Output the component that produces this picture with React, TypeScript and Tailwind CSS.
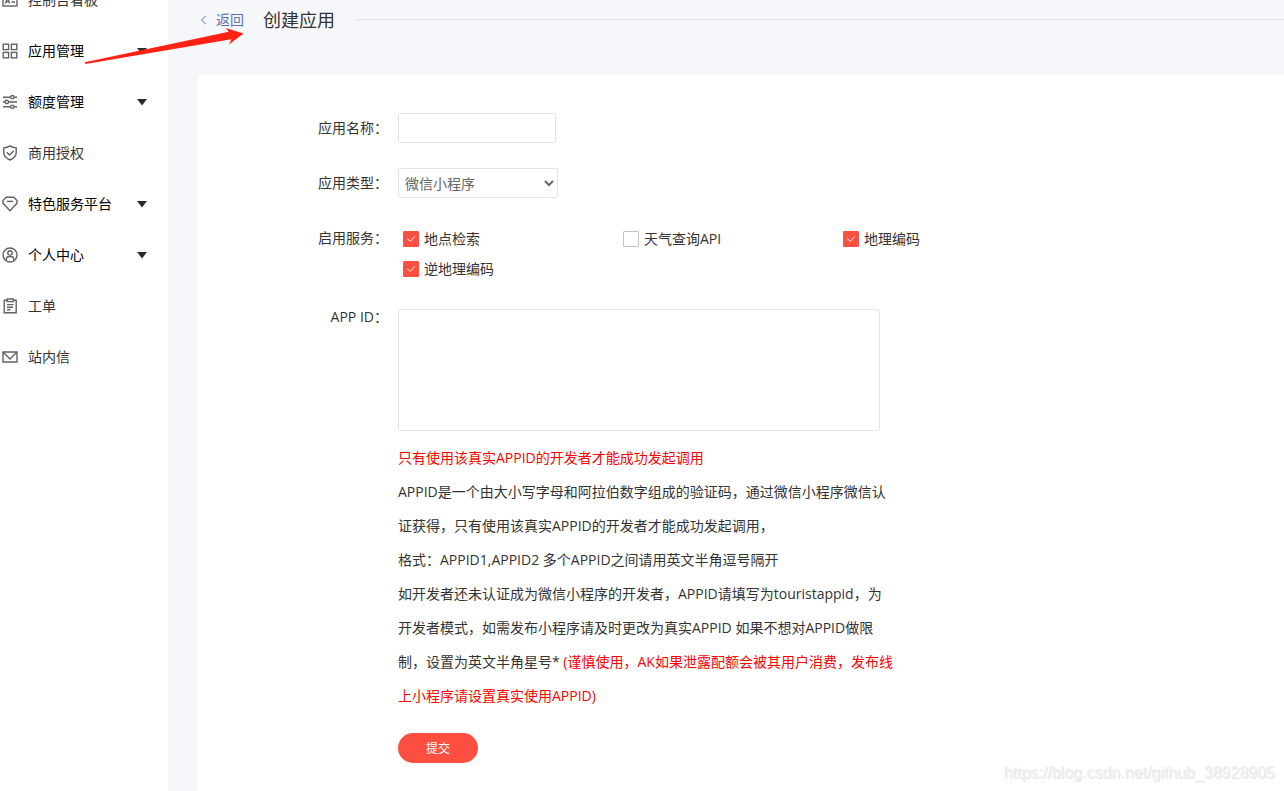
import type { ReactNode } from "react";

type NavItem = { label: string; icon: ReactNode; expandable?: boolean };

function Icon({ children }: { children: ReactNode }) {
  return (
    <svg
      viewBox="0 0 16 16"
      className="size-4 shrink-0"
      fill="none"
      stroke="#606266"
      strokeWidth="1.4"
      aria-hidden="true"
    >
      {children}
    </svg>
  );
}

const navItems: NavItem[] = [
  {
    label: "控制台看板",
    icon: (
      <Icon>
        <rect x="1" y="2" width="14" height="12" />
        <path d="M3.5 11.5 5.5 5l2 6.5M4 9.5h3M9.5 7H13M9.5 10H13" />
      </Icon>
    ),
  },
  {
    label: "应用管理",
    icon: (
      <Icon>
        <rect x="1.2" y="1.2" width="5.4" height="5.4" />
        <rect x="9.4" y="1.2" width="5.4" height="5.4" />
        <rect x="1.2" y="9.4" width="5.4" height="5.4" />
        <rect x="9.4" y="9.4" width="5.4" height="5.4" />
      </Icon>
    ),
    expandable: true,
  },
  {
    label: "额度管理",
    icon: (
      <Icon>
        <path d="M1 3.2h7.6M12.2 3.2H15M1 8h2M6.6 8H15M1 12.8h7.6M12.2 12.8H15" />
        <circle cx="10.4" cy="3.2" r="1.7" />
        <circle cx="4.8" cy="8" r="1.7" />
        <circle cx="10.4" cy="12.8" r="1.7" />
      </Icon>
    ),
    expandable: true,
  },
  {
    label: "商用授权",
    icon: (
      <Icon>
        <path d="M8 .9c1.800 1.300 3.700 1.900 6.200 2v5.200c0 3-2.500 5.200-6.200 6.900-3.700-1.700-6.200-3.900-6.200-6.900V2.900C4.300 2.800 6.200 2.200 8 .9Z" />
        <path d="m4.800 7.300 2.700 2.700 4.300-4.300" />
      </Icon>
    ),
  },
  {
    label: "特色服务平台",
    icon: (
      <Icon>
        <path d="M4.200 1.300h7.600L15 4.500v2.700L8 14.800 1 7.200V4.500Z" strokeLinejoin="round" />
        <path d="M4.800 5.400h6.400" />
      </Icon>
    ),
    expandable: true,
  },
  {
    label: "个人中心",
    icon: (
      <Icon>
        <circle cx="8" cy="8" r="7" />
        <circle cx="8" cy="5.900" r="2.200" />
        <path d="M4.300 13.500v-1.300c0-1.700 1.300-2.700 3.700-2.700s3.700 1 3.700 2.700v1.300" />
      </Icon>
    ),
    expandable: true,
  },
  {
    label: "工单",
    icon: (
      <Icon>
        <path d="M5 2.300H2.200v12.500h12V2.300h-2.800M5.200 1h6v2.600h-6zM5 6.600h6.500M5 9.200h6M5 11.800h3.500" />
      </Icon>
    ),
  },
  {
    label: "站内信",
    icon: (
      <Icon>
        <path d="M1 3h14v10H1zM1.500 3.500 8 10l6.500-6.500" />
      </Icon>
    ),
  },
];

const services = [
  { id: "place", label: "地点检索", checked: true },
  { id: "weather", label: "天气查询API", checked: false },
  { id: "geocode", label: "地理编码", checked: true },
  { id: "regeocode", label: "逆地理编码", checked: true },
];

function Sidebar() {
  return (
    <aside className="w-[168px] shrink-0 overflow-hidden bg-white">
      <nav className="-mt-[26px]">
        <ul>
          {navItems.map((item) => (
            <li key={item.label}>
              <a
                href="#"
                className={`flex h-[51px] items-center pr-5 pl-[2px] ${item.expandable ? "text-black" : "text-[#333]"}`}
              >
                {item.icon}
                <span className="ml-[10px] flex-1">{item.label}</span>
                {item.expandable && (
                  <svg viewBox="0 0 12 8" className="h-2 w-3" fill="#2b2b2b" aria-hidden="true">
                    <path d="M1 1h10L6 7.500z" />
                  </svg>
                )}
              </a>
            </li>
          ))}
        </ul>
      </nav>
    </aside>
  );
}

function ServiceCheckbox({ id, label, checked }: { id: string; label: string; checked: boolean }) {
  return (
    <label htmlFor={id} className="flex h-[30px] items-center gap-[5px]">
      <span className="relative flex size-4">
        <input
          id={id}
          type="checkbox"
          defaultChecked={checked}
          className="peer size-4 appearance-none rounded-[1px] border border-[#c2c2c2] bg-white checked:border-[#ff4f40] checked:bg-[#ff4f40]"
        />
        <svg
          viewBox="0 0 16 16"
          className="pointer-events-none absolute inset-0 hidden size-4 peer-checked:block"
          fill="none"
          stroke="#fff"
          strokeWidth="1"
          aria-hidden="true"
        >
          <path d="m4.500 7.700 2.600 2.700 4.700-5" />
        </svg>
      </span>
      {label}
    </label>
  );
}

const labelStyle = "w-[190px] shrink-0 text-right";

export default function App() {
  return (
    <div className="relative flex min-h-screen bg-[#f6f7fb] font-['Open_Sans','Noto_Sans_CJK_SC',sans-serif] text-sm text-[#333]">
      <Sidebar />
      <main className="flex min-w-0 flex-1 flex-col pl-[30px]">
        <header className="flex h-[75px] items-start">
          <div className="flex h-10 flex-1 items-center">
            <a href="#" className="flex items-center gap-2 text-[#5b74b5]">
              <svg viewBox="0 0 10 10" className="size-[10px]" fill="none" stroke="currentColor" aria-hidden="true">
                <path d="M8 .8 3.500 5 8 9.200" />
              </svg>
              返回
            </a>
            <h1 className="ml-[19px] text-lg">创建应用</h1>
            <div className="ml-5 h-[2px] flex-1 border-t border-[#e4e6ec]" />
          </div>
        </header>

        <form className="flex flex-1 flex-col gap-[25px] rounded-tl bg-white pt-[38px] pb-7">
          <div className="flex items-center gap-[10px]">
            <label htmlFor="app-name" className={labelStyle}>
              应用名称：
            </label>
            <input
              id="app-name"
              type="text"
              className="h-[30px] w-[158px] rounded-xs border border-[#e1e4ec] bg-white px-[6px]"
            />
          </div>

          <div className="flex items-center gap-[10px]">
            <label htmlFor="app-type" className={labelStyle}>
              应用类型：
            </label>
            <select
              id="app-type"
              className="h-[30px] w-40 rounded-xs border border-[#e1e4ec] bg-white px-[2px] text-[#666]"
            >
              <option>微信小程序</option>
            </select>
          </div>

          <fieldset className="flex gap-[10px]" aria-labelledby="services-label">
            <span id="services-label" className={`${labelStyle} leading-[30px]`}>
              启用服务：
            </span>
            <div className="grid grid-cols-[220px_220px_220px] pt-px pl-[5px]">
              {services.map((service) => (
                <ServiceCheckbox key={service.id} {...service} />
              ))}
            </div>
          </fieldset>

          <div className="flex gap-[10px]">
            <label htmlFor="app-id" className={`${labelStyle} leading-4`}>
              APP ID：
            </label>
            <div>
              <textarea
                id="app-id"
                className="block h-[122px] w-[482px] resize-none rounded-xs border border-[#e1e4ec] bg-white p-[6px]"
              />
              <div className="mt-[10px] w-[496px] leading-[34px]">
                <p className="text-[#f00]">只有使用该真实APPID的开发者才能成功发起调用</p>
                <p>
                  APPID是一个由大小写字母和阿拉伯数字组成的验证码，通过微信小程序微信认证获得，只有使用该真实APPID的开发者才能成功发起调用，
                </p>
                <p>格式：APPID1,APPID2 多个APPID之间请用英文半角逗号隔开</p>
                <p>
                  如开发者还未认证成为微信小程序的开发者，APPID请填写为touristappid，为开发者模式，如需发布小程序请及时更改为真实APPID
                  如果不想对APPID做限制，设置为英文半角星号*{" "}
                  <span className="text-[#f00]">
                    (谨慎使用，AK如果泄露配额会被其用户消费，发布线上小程序请设置真实使用APPID)
                  </span>
                </p>
              </div>
              <button
                type="submit"
                className="mt-5 block h-[30px] w-20 rounded-full bg-[#ff4f40] pt-[2px] text-xs text-white"
              >
                提交
              </button>
            </div>
          </div>
        </form>
      </main>

      <svg
        viewBox="0 0 160 37"
        className="pointer-events-none absolute top-7 left-[84px] h-[37px] w-40"
        fill="#ff2212"
        aria-hidden="true"
      >
        <path d="M.8 34.300 144.700 3.700 141.700 0l17.800 5.400L145 16.500l2.400-5.200L1.500 35.900Z" />
      </svg>
      <p className="pointer-events-none absolute right-[9px] bottom-2 font-['Liberation_Sans',sans-serif] text-base leading-5 text-[#f0f0f0] [text-shadow:1px_1px_1px_#e2e2e2]">
        https://blog.csdn.net/github_38928905
      </p>
    </div>
  );
}
